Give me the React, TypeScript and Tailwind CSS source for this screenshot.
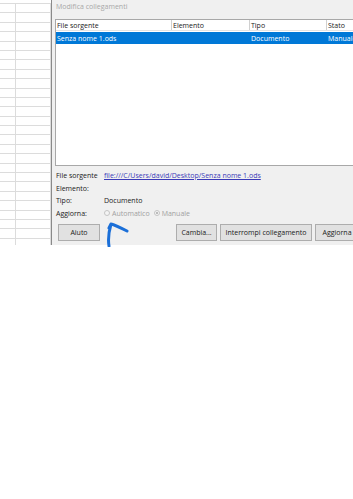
const font = { fontFamily: '"Open Sans", "Noto Sans", sans-serif' };

const rows = Array.from({ length: 26 });

function Sheet() {
    return (
        <div className="w-[52px] h-full overflow-hidden bg-white border-r border-[#8a8a8a] flex flex-col pt-[3px]">
            {rows.map((_, i) => (
                <div key={i} className="flex h-[9.4px] shrink-0 border-t border-[#dcdcdc]">
                    <div className="w-[16px] border-r border-[#dcdcdc]" />
                    <div className="flex-1 border-r border-[#dcdcdc]" />
                </div>
            ))}
        </div>
    );
}

function Button({ label, w }: { label: string; w: string }) {
    return (
        <div className={`${w} h-[17px] shrink-0 bg-[#e1e1e1] border border-[#adadad] flex items-center justify-center text-[#1a1a1a]`}>
            {label}
        </div>
    );
}

function InfoRow({ label, children }: { label: string; children?: React.ReactNode }) {
    return (
        <div className="flex h-[12.7px] items-center">
            <div className="w-[48px] shrink-0 text-[#222]">{label}</div>
            <div className="flex items-center">{children}</div>
        </div>
    );
}

export default function App() {
    return (
        <div className="w-[353px] h-[499px] bg-white overflow-hidden text-[7px] leading-none" style={font}>
            <div className="flex h-[245px]">
                <Sheet />
                <div className="flex-1 bg-[#f0f0f0] flex flex-col min-w-0 relative">
                    <div className="pl-[4px] pt-[3px] h-[19px] text-[#a8a8a8]">Modifica collegamenti</div>

                    {/* link list */}
                    <div className="ml-[3px] w-[320px] h-[147px] bg-white border border-[#a8a8a8] border-r-0 flex flex-col">
                        <div className="flex h-[11px] border-b border-[#e3e3e3] text-[#222]">
                            <div className="w-[116px] pl-[1px] border-r border-[#d0d0d0] flex items-center">File sorgente</div>
                            <div className="w-[78px] pl-[1px] border-r border-[#d0d0d0] flex items-center">Elemento</div>
                            <div className="w-[77px] pl-[1px] border-r border-[#d0d0d0] flex items-center">Tipo</div>
                            <div className="flex-1 pl-[1px] flex items-center">Stato</div>
                        </div>
                        <div className="flex h-[12px] mt-[1px] bg-[#0078d7] text-white">
                            <div className="w-[116px] pl-[1px] flex items-center">Senza nome 1.ods</div>
                            <div className="w-[78px]" />
                            <div className="w-[77px] pl-[1px] flex items-center">Documento</div>
                            <div className="flex-1 pl-[1px] flex items-center overflow-hidden whitespace-nowrap">Manuale</div>
                        </div>
                    </div>

                    <div className="pl-[4px] pt-[3px] flex flex-col">
                        <InfoRow label="File sorgente">
                            <span className="text-[#3a3ab8] underline">file:///C/Users/david/Desktop/Senza nome 1.ods</span>
                        </InfoRow>
                        <InfoRow label="Elemento:" />
                        <InfoRow label="Tipo:">
                            <span className="text-[#222]">Documento</span>
                        </InfoRow>
                        <InfoRow label="Aggiorna:">
                            <span className="flex items-center gap-[2px] text-[#a0a0a0]">
                                <span className="w-[6px] h-[6px] rounded-full border border-[#c4c4c4] bg-[#f4f4f4]" />
                                Automatico
                            </span>
                            <span className="flex items-center gap-[2px] text-[#a0a0a0] ml-[4px]">
                                <span className="w-[6px] h-[6px] rounded-full border border-[#c4c4c4] bg-[#f4f4f4] flex items-center justify-center">
                                    <span className="w-[2px] h-[2px] rounded-full bg-[#a8a8a8]" />
                                </span>
                                Manuale
                            </span>
                        </InfoRow>
                    </div>

                    <div className="flex mt-[4px] pl-[6px]">
                        <Button label="Aiuto" w="w-[42px]" />
                        <div className="w-[76px] shrink-0" />
                        <div className="flex gap-[3px]">
                            <Button label="Cambia..." w="w-[41px]" />
                            <Button label="Interrompi collegamento" w="w-[92px]" />
                            <Button label="Aggiorna" w="w-[44px]" />
                        </div>
                    </div>

                    {/* hand-drawn annotation */}
                    <svg className="absolute left-[53px] top-[219px]" width="30" height="28" viewBox="0 0 30 28" fill="none">
                        <path d="M4 27 C3 21 4 12 6 5 M6 5 C10 6 14 8 22 12 M6 5 L4 9" stroke="#1b6fd8" strokeWidth="3" strokeLinecap="round" strokeLinejoin="round" />
                    </svg>
                </div>
            </div>
        </div>
    );
}
